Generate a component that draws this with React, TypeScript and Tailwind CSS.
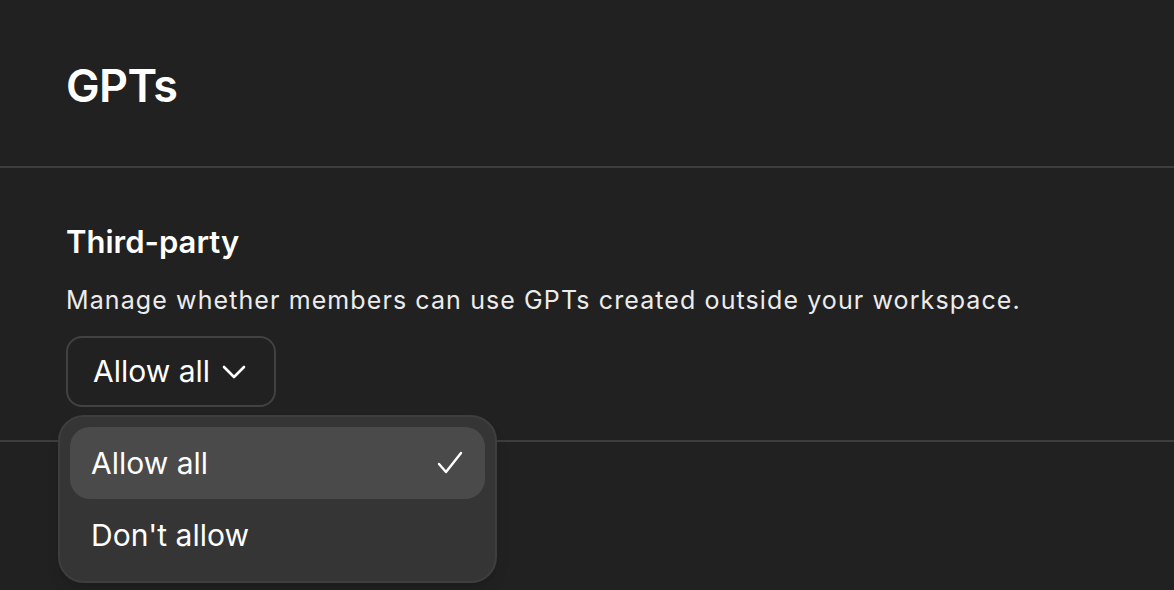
import { useState } from "react"

const opciones = ["Allow all", "Don't allow"]

export default function App() {
	const [valor, setValor] = useState("Allow all")
	const [abierto, setAbierto] = useState(true)

	return (
		<div className="min-h-screen bg-[#212121] text-white font-['Inter',sans-serif] overflow-hidden">
			<div className="h-[166px] px-[66px] pt-[62px]">
				<h1 className="text-[45px] leading-[48px] font-semibold tracking-[-0.6px]">
					GPTs
				</h1>
			</div>
			<div className="h-[2px] bg-[#3d3d3d]" />

			<div className="h-[272px] px-[66px] pt-[54px]">
				<h2 className="text-[31px] leading-[40px] font-semibold">
					Third-party
				</h2>
				<p className="mt-[22px] text-[25px] leading-[32px] tracking-[1.1px] text-[#ececec]">
					Manage whether members can use GPTs created outside your workspace.
				</p>

				<div className="relative mt-[20px]">
					<button
						type="button"
						onClick={() => setAbierto(!abierto)}
						className="flex h-[71px] w-[210px] items-center gap-[12px] rounded-[16px] border-2 border-[#424242] pl-[25px] text-[30px] text-white"
					>
						{valor}
						<svg
							width="24"
							height="14"
							viewBox="0 0 24 14"
							fill="none"
							stroke="currentColor"
							strokeWidth="2.6"
							strokeLinecap="round"
							strokeLinejoin="round"
						>
							<path d="M2 2l10 10L22 2" />
						</svg>
					</button>

					{abierto && (
						<div className="absolute left-[-8px] top-[79px] z-10 w-[439px] rounded-[26px] border-2 border-[#3e3e3e] bg-[#353535] p-[10px] shadow-lg">
							{opciones.map((op) => (
								<button
									key={op}
									type="button"
									onClick={() => {
										setValor(op)
										setAbierto(false)
									}}
									className={`flex h-[72px] w-full items-center justify-between rounded-[20px] pl-[21px] pr-[22px] text-[30px] text-white ${
										op === valor ? "bg-[#4a4a4a]" : ""
									}`}
								>
									{op}
									{op === valor && (
										<svg
											width="26"
											height="24"
											viewBox="0 0 26 24"
											fill="none"
											stroke="currentColor"
											strokeWidth="2.4"
											strokeLinecap="round"
											strokeLinejoin="round"
										>
											<path d="M2 13l7 8L24 2" />
										</svg>
									)}
								</button>
							))}
						</div>
					)}
				</div>
			</div>
			<div className="h-[2px] bg-[#3d3d3d]" />
		</div>
	)
}
